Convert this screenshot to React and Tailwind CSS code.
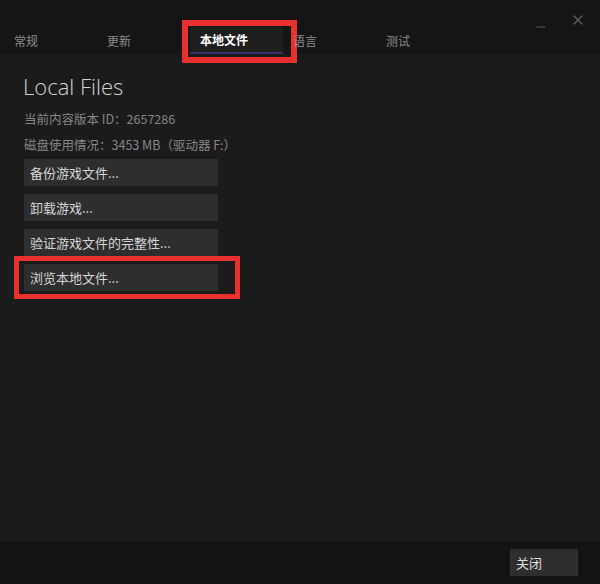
import { X, Minus } from 'lucide-react';

const tabs = ['常规', '更新', '本地文件', '语言', '测试'];
const actions = ['备份游戏文件...', '卸载游戏...', '验证游戏文件的完整性...', '浏览本地文件...'];

const cjk = { fontFamily: '"Noto Sans CJK SC", "Noto Sans", sans-serif' };

export default function App() {
  return (
    <div className="w-[600px] h-[584px] bg-[#151515] flex flex-col text-[#cfcfcf]" style={cjk}>
      {/* Header with tabs */}
      <div className="relative h-[54px] shrink-0 flex items-end">
        <div className="absolute right-[14px] top-[6px] flex items-center gap-[22px] text-[#5c5c5c]">
          <Minus size={14} strokeWidth={2} className="mt-[14px]" />
          <X size={16} strokeWidth={2} />
        </div>
        <div className="flex items-end pl-[4px] h-[27px]">
          {tabs.map((t, i) => (
            <div
              key={t}
              className={`relative w-[93px] h-[27px] flex items-center pl-[10px] text-[12px] ${
                i === 2 ? 'bg-[#1e1e1e] text-white font-bold pl-[7px] border-b-2 border-[#3d2a6e]' : 'text-[#8c8c8c]'
              }`}
            >
              {t}
              {i === 2 && (
                <div className="absolute left-[-8px] top-[-7px] w-[115px] h-[43px] border-[6px] border-[#e8312f]" />
              )}
            </div>
          ))}
        </div>
      </div>

      {/* Content */}
      <div className="flex-1 bg-[#1b1b1b] pl-[24px] pt-[18px]">
        <h1
          className="text-[#d4d4d4] text-[22px] font-light leading-[28px] -ml-[1px]"
          style={{ fontFamily: '"Open Sans", sans-serif' }}
        >
          Local Files
        </h1>
        <div className="mt-[9px] flex flex-col gap-[6px] text-[12.5px] text-[#868686] leading-[20px]">
          <div>当前内容版本 ID：2657286</div>
          <div>磁盘使用情况：3453 MB（驱动器 F:）</div>
        </div>
        <div className="mt-[4px] flex flex-col gap-[8px]">
          {actions.map((a, i) => (
            <div key={a} className="relative">
              <div className="w-[194px] h-[27px] bg-[#2e2e2e] flex items-center pl-[6px] text-[13px] text-[#d6d6d6]">
                {a}
              </div>
              {i === 3 && (
                <div className="absolute left-[-10px] top-[-8px] w-[226px] h-[43px] border-[5px] border-[#e8312f]" />
              )}
            </div>
          ))}
        </div>
      </div>

      {/* Footer */}
      <div className="h-[43px] shrink-0 bg-[#131313] flex items-center justify-end pr-[22px]">
        <div className="w-[68px] h-[27px] bg-[#2e2e2e] flex items-center pl-[6px] text-[13px] text-[#e0e0e0]">
          关闭
        </div>
      </div>
    </div>
  );
}
